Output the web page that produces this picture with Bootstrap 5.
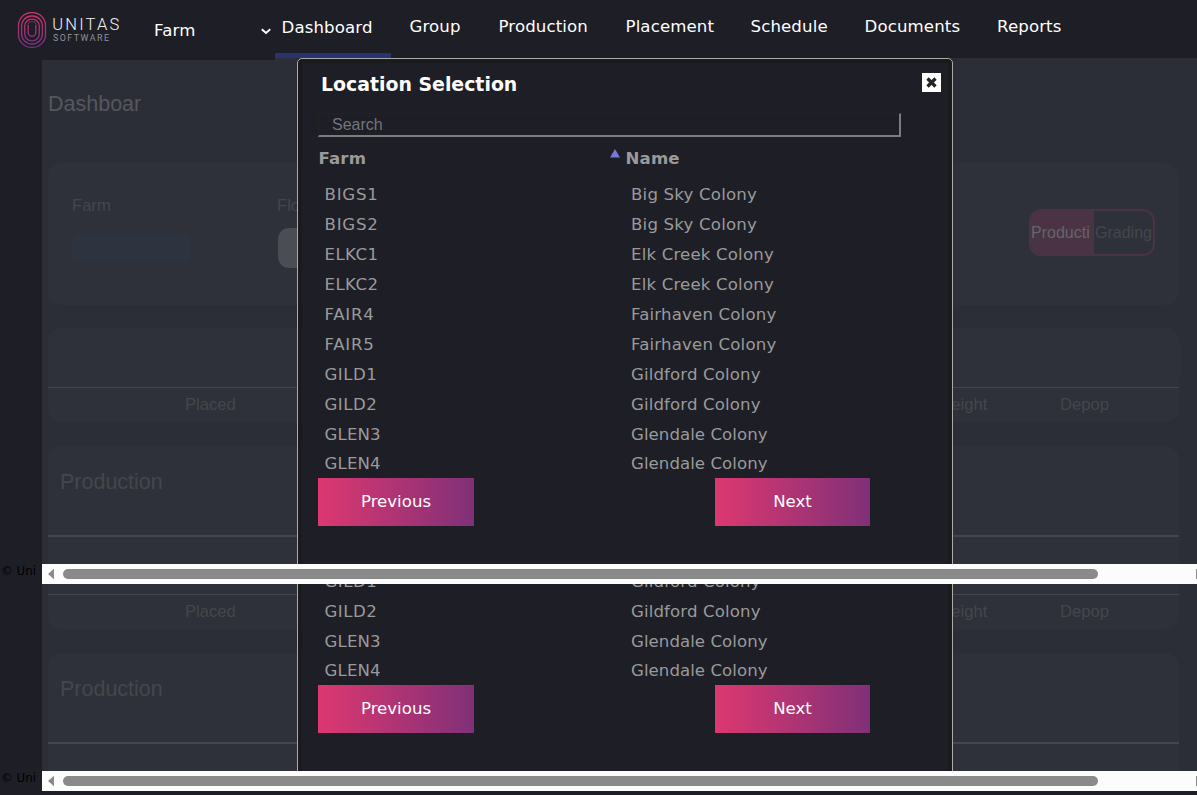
<!DOCTYPE html>
<html lang="en">
<head>
<meta charset="utf-8">
<title>Unitas Software</title>
<link href="https://cdn.jsdelivr.net/npm/bootstrap@5.3.0/dist/css/bootstrap.min.css" rel="stylesheet">
<style>
:root{--ink:#1e1e27;--page:#2b2e36;--panel:#2e3139;--rule:#45464d}
body{background:var(--ink);font-family:"DejaVu Sans",Verdana,sans-serif;font-size:16.6px;line-height:20px;height:795px;width:1197px;overflow:hidden}
.topbar{height:58px;padding:0 0 0 17px;color:#fff}
.brandbox{width:137px;padding-top:11px}
.farm-pick{width:121px;height:20px;margin-top:21px;padding-right:4px;letter-spacing:.2px}
.menu{display:grid;grid-template-columns:134.500px 89px 127px 125px 114px 132.5px 110px;letter-spacing:.12px}
.menu a{color:#fff;text-decoration:none;padding-top:17px;height:58px}
.menu a.current{width:116px;padding:18px 0 0 6.500px;border-bottom:5px solid #28336f}
.pane{position:relative;overflow:hidden}
.pane-a{height:526px}
.pane-b{height:207px}
.side{width:42px;color:#000;font-size:11.800px;line-height:16px;padding:0 0 5px 1px;margin-bottom:-20px;white-space:nowrap}
.page{background:var(--page);font-family:"Liberation Sans",Arial,sans-serif;color:#45464c;padding:0 18px 0 6px}
.pane-a .page{border-top:2px solid transparent}
.pane-a .page::before{content:"";position:absolute;left:42px;top:0;width:233px;height:2px;background:var(--ink)}
.headline{font-size:21.5px;line-height:26px;color:#55575d;height:103px;padding-top:31px}
.panel{background:var(--panel);border-radius:13px}
.filters{height:142px;margin-bottom:23px;padding:0 24px}
.filters .lbl{padding-top:33px;line-height:20px}
.farmbox{width:119px;height:26px;border-radius:6px;background:#2d3440;margin-top:19px}
.flockbox{width:119px;height:40px;border-radius:11px;background:#4b4d55;margin:12px 0 0 1px}
.toggler{width:126px;height:47px;margin-top:46px;border:2px solid #4b3346;border-radius:12px;font-size:16px;overflow:hidden;line-height:43px}
.toggler .on{width:63px;background:#4b3346;color:#64656a}
.toggler .off{padding-left:1px}
.stats{position:relative;height:94px;margin-bottom:24px;padding-top:59px}
.stats::after{content:"";position:absolute;right:-3px;top:12px;width:14px;height:36px;border-radius:0 8px 0 0;background:var(--panel)}
.stats-cells{border-top:1px solid var(--rule);display:grid;grid-template-columns:137px 751px 124px auto;padding-top:7px}
.prod{height:200px;border-radius:13px 13px 0 0}
.prod-title{font-size:21.5px;padding:22px 12px;line-height:28px;border-bottom:2px solid var(--rule);box-sizing:content-box;height:45px}
.hbar{height:20px;width:1155px;margin-left:42px;background:#fcfcfc;position:relative;z-index:3}
.hbar .thumb{width:1035px;height:10px;border-radius:5px;background:#8a8a8a;margin-left:5px}
.hbar .edge{width:1px;height:10px;background:#8a8a8a}
/* dialog floats above the dimmed page */
.picker{position:absolute;z-index:2;left:297px;top:0;width:656px;height:640px;background:var(--ink);border:1px solid #aaa;border-radius:5px;box-shadow:inset 0 0 0 4px #1b1b1c;color:#9a9a9a;padding:0 20px}
.pane-b .picker{top:-319px}
.picker h1{font-size:18.9px;font-weight:700;color:#fff;margin:15px 0 0 3px;line-height:20px}
.closer{width:19px;height:19px;background:#fff;margin:14px -9px 0 0}
.finder{width:583px;height:24px;margin-top:19px;border:2px solid #7c7c7c;border-top-color:#222222;border-left-color:#222222;border-width:1px 2px 2px 1px;padding:0 0 0 13px;font:16px/22px "Liberation Sans",Arial,sans-serif;color:#74747a}
.cols{display:grid;grid-template-columns:290px 1fr}
.heads{font-weight:700;margin-top:12px;height:31px;padding-left:.5px;letter-spacing:.15px}
.rows{line-height:29.9px;padding:.4px 0 0 6.500px;height:298px}
.rows .cols{grid-template-columns:306.5px 1fr;height:29.9px}
.go{height:48px;background:linear-gradient(90deg,#dd3870,#803078);color:#fff;line-height:47px;text-align:center}
</style>
</head>
<body>
<header class="topbar d-flex">
  <div class="brandbox">
    <svg width="104" height="38" viewBox="17 11 104 38" fill="none">
      <defs><linearGradient id="fp" x1="0" y1="12" x2="0" y2="48" gradientUnits="userSpaceOnUse"><stop stop-color="#d3336c"/><stop offset="1" stop-color="#743080"/></linearGradient></defs>
      <g stroke="url(#fp)" stroke-width="1.3">
        <rect x="18.5" y="12.6" width="27" height="34.8" rx="13"/>
        <rect x="21.6" y="16" width="20.8" height="28" rx="10"/>
        <rect x="24.7" y="19.2" width="14.6" height="21.6" rx="7"/>
        <path d="M28.2 25v7.5a3.8 3.8 0 0 0 7.6 0V25"/>
        <path d="M28 24.5a4 3 0 0 1 8 0" stroke-width=".7"/>
      </g>
      <text x="52.2" y="30.2" font-family="Roboto" font-weight="300" font-size="16.5" fill="#f2f2f2" textLength="67">UNITAS</text>
      <text x="53" y="41.2" font-family="Roboto" font-weight="400" font-size="8.9" fill="#929297" textLength="56">SOFTWARE</text>
    </svg>
  </div>
  <div class="farm-pick d-flex justify-content-between align-items-center"><span>Farm</span>
    <svg width="10" height="7" viewBox="0 0 10 7"><path d="M.8 1.2 5 5l4.200-3.800" fill="none" stroke="#fff" stroke-width="1.9"/></svg></div>
  <nav class="menu">
    <a class="current" href="#">Dashboard</a><a href="#">Group</a><a href="#">Production</a><a href="#">Placement</a><a href="#">Schedule</a><a href="#">Documents</a><a href="#">Reports</a>
  </nav>
</header>

<section class="pane pane-a">
  <div class="d-flex" style="height:506px">
    <div class="side align-self-end">© Uni</div>
    <div class="page flex-grow-1 overflow-hidden" style="height:506px">
      <div class="headline">Dashboar</div>
      <div class="panel filters d-flex">
        <div style="width:205px"><div class="lbl">Farm</div><div class="farmbox"></div></div>
        <div class="flex-grow-1"><div class="lbl">Flock</div><div class="flockbox"></div></div>
        <div class="toggler d-flex"><div class="on">Producti</div><div class="off">Grading</div></div>
      </div>
      <div class="panel stats"><div class="stats-cells"><span></span><span>Placed</span><span>Weight</span><span>Depop</span></div></div>
      <div class="panel prod"><div class="prod-title">Production</div></div>
    </div>
  </div>
  <div class="hbar d-flex align-items-center">
    <svg width="16" height="12"><path d="M6 6 12 .8v10.400z" fill="#8a8a8a"/></svg>
    <div class="thumb"></div><div class="edge ms-auto"></div>
  </div>
  <div class="picker"></div>
</section>

<section class="pane pane-b">
  <div class="d-flex" style="height:187px">
    <div class="side align-self-end">© Uni</div>
    <div class="page flex-grow-1 overflow-hidden" style="height:187px">
      <div class="panel stats" style="margin-top:-49px"><div class="stats-cells"><span></span><span>Placed</span><span>Weight</span><span>Depop</span></div></div>
      <div class="panel prod"><div class="prod-title">Production</div></div>
    </div>
  </div>
  <div class="hbar d-flex align-items-center">
    <svg width="16" height="12"><path d="M6 6 12 .8v10.400z" fill="#8a8a8a"/></svg>
    <div class="thumb"></div><div class="edge ms-auto"></div>
  </div>
  <div class="picker"></div>
</section>

<template id="dialog">
  <div class="d-flex justify-content-between" style="height:35px"><h1>Location Selection</h1>
    <div class="closer d-flex align-items-center justify-content-center"><svg width="13" height="13"><path d="m2.500 2.500 8 8m0-8-8 8" stroke="#242424" stroke-width="3.300"/></svg></div></div>
  <div class="finder">Search</div>
  <div class="cols heads"><span>Farm</span><div class="d-flex"><svg width="17" height="14"><path d="M1 8.500 6 0l5 8.500z" fill="#7779d8"/></svg><span>Name</span></div></div>
  <div class="rows"></div>
  <div class="d-flex"><div class="go" style="width:156px">Previous</div><div class="go" style="width:155px;margin-left:241px">Next</div></div>
</template>
<script>
// code, name, tracking of the code, tracking of the name
const farms=[["BIGS1","Big Sky",.75,.2],["BIGS2","Big Sky",.75,.2],["ELKC1","Elk Creek",.4,.17],["ELKC2","Elk Creek",.4,.17],["FAIR4","Fairhaven",.75,.17],["FAIR5","Fairhaven",.75,.17],["GILD1","Gildford",.5,.12],["GILD2","Gildford",.5,.12],["GLEN3","Glendale",.15,.05],["GLEN4","Glendale",.15,.05]];
document.querySelectorAll('.picker').forEach(p=>{
  p.append(document.getElementById('dialog').content.cloneNode(true));
  p.querySelector('.rows').innerHTML=farms.map(f=>`<div class="cols"><span style="letter-spacing:${f[2]}px">${f[0]}</span><span style="letter-spacing:${f[3]}px">${f[1]} Colony</span></div>`).join('');
});
</script>
<script src="https://cdn.jsdelivr.net/npm/bootstrap@5.3.0/dist/js/bootstrap.bundle.min.js"></script>
</body>
</html>
